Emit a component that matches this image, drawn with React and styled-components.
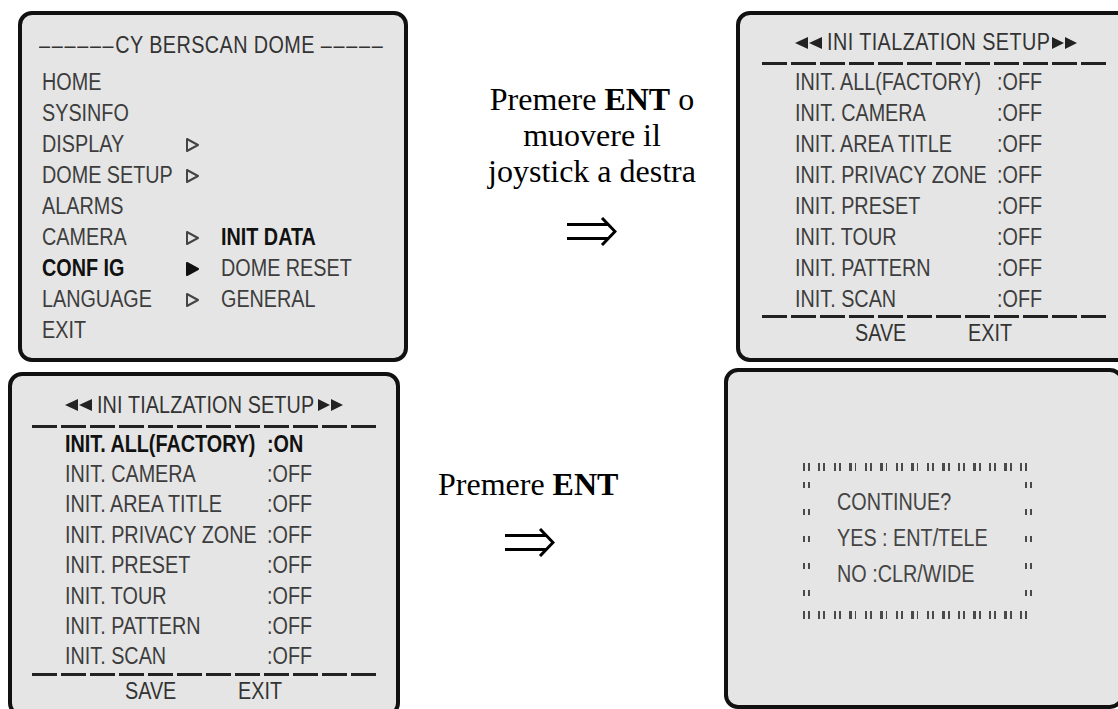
import React from "react";
import styled, { createGlobalStyle, css } from "styled-components";

const OSD_FONT = `"Liberation Sans", Arial, sans-serif`;

// the OSD uses a tall, condensed face: squeeze Liberation Sans to its width
const narrow = css`
  display: inline-block;
  transform: scaleX(0.86);
  transform-origin: left center;
`;

const GlobalStyle = createGlobalStyle`
  html, body {
    margin: 0;
    padding: 0;
    background: #fff;
  }
  body {
    width: 1118px;
    height: 709px;
    overflow: hidden;
  }
`;

// LAYOUT //
const Page = styled.div`
  width: 1118px;
  height: 709px;
  overflow: hidden;
  display: flex;
  flex-direction: column;
`;

const Row = styled.div`
  display: flex;
  align-items: flex-start;
  flex-shrink: 0;
  height: ${(p) => p.$h}px;
`;

const Panel = styled.div`
  box-sizing: border-box;
  flex-shrink: 0;
  width: ${(p) => p.$w}px;
  height: ${(p) => p.$h}px;
  margin: ${(p) => p.$margin};
  padding: ${(p) => p.$pad};
  border: 4px solid #111;
  border-radius: 14px;
  background: #e5e5e5;
  overflow: hidden;
  font-family: ${OSD_FONT};
  font-size: 23px;
  color: #3d3d3d;
  white-space: nowrap;
`;

// CAPTIONS //
const Caption = styled.div`
  box-sizing: border-box;
  flex-shrink: 0;
  width: ${(p) => p.$w}px;
  padding: ${(p) => p.$pad};
  display: flex;
  flex-direction: column;
  align-items: ${(p) => (p.$center ? "center" : "flex-start")};
  font-family: "Liberation Serif", "Times New Roman", serif;
  font-size: 32px;
  line-height: 36px;
  color: #000;
  text-align: center;
  b {
    font-weight: bold;
  }
`;

const ArrowBox = styled.div`
  margin-top: ${(p) => p.$top}px;
  margin-left: ${(p) => p.$left || 0}px;
  line-height: 0;
`;

const BigArrow = ({ top, left }) => (
  <ArrowBox $top={top} $left={left}>
    <svg width="50" height="29" viewBox="0 0 50 29">
      <path d="M0 7.5H42M0 21.5H42" stroke="#000" strokeWidth="3" />
      <path d="M35 1L48 14.5L35 28" stroke="#000" strokeWidth="3" fill="none" />
    </svg>
  </ArrowBox>
);

// MAIN MENU //
const MenuTitle = styled.div`
  height: 31px;
  line-height: 31px;
  margin: 0 0 6px -3px;
  color: #333;
  > span {
    ${narrow}
    letter-spacing: 0.5px;
  }
  i {
    font-style: normal;
    letter-spacing: 2px;
  }
`;

const MenuGrid = styled.div`
  display: grid;
  grid-template-columns: 143px 36px auto;
  grid-auto-rows: 31px;
  align-items: center;
`;

const MenuCell = styled.div`
  ${narrow}
  line-height: 31px;
  font-weight: ${(p) => (p.$bold ? "bold" : "normal")};
  color: ${(p) => (p.$bold ? "#111" : "#3d3d3d")};
`;

const MarkerCell = styled.div`
  display: flex;
  align-items: center;
  height: 31px;
`;

const Tri = ({ filled }) => (
  <svg width="15" height="16" viewBox="0 0 15 16">
    <polygon
      points="2,2 13,8 2,14"
      fill={filled ? "#111" : "none"}
      stroke={filled ? "#111" : "#444"}
      strokeWidth="2"
      strokeLinejoin="round"
    />
  </svg>
);

const menu = [
  { label: "HOME" },
  { label: "SYSINFO" },
  { label: "DISPLAY", mark: "open" },
  { label: "DOME SETUP", mark: "open" },
  { label: "ALARMS" },
  { label: "CAMERA", mark: "open", sub: "INIT DATA", subBold: true },
  { label: "CONF IG", mark: "filled", sub: "DOME RESET", bold: true },
  { label: "LANGUAGE", mark: "open", sub: "GENERAL" },
  { label: "EXIT" },
];

const MainMenu = () => (
  <Panel $w={390} $h={351} $margin="11px 0 0 18px" $pad="15px 0 0 20px">
    <MenuTitle>
      <span>
        <i>––––––</i>CY BERSCAN DOME <i>–––––</i>
      </span>
    </MenuTitle>
    <MenuGrid>
      {menu.map((m) => (
        <React.Fragment key={m.label}>
          <MenuCell $bold={m.bold}>{m.label}</MenuCell>
          <MarkerCell>{m.mark && <Tri filled={m.mark === "filled"} />}</MarkerCell>
          <MenuCell $bold={m.subBold}>{m.sub}</MenuCell>
        </React.Fragment>
      ))}
    </MenuGrid>
  </Panel>
);

// INIT SETUP //
const InitTitle = styled.div`
  display: flex;
  align-items: center;
  height: 31px;
  line-height: 31px;
  margin-left: -3px;
  color: #333;
`;

const TitleText = styled.span`
  flex: none;
  width: ${(p) => p.$w}px;
  margin: 0 ${(p) => p.$gap}px 0 3px;
  span {
    ${narrow}
    letter-spacing: ${(p) => p.$spacing}px;
  }
`;

const DashRule = styled.div`
  width: 346px;
  height: 3px;
  margin: ${(p) => p.$top}px 0 0 -33px;
  background: repeating-linear-gradient(
    90deg,
    #222 0 25px,
    transparent 25px 29px
  );
`;

const InitList = styled.div`
  margin-top: ${(p) => p.$top}px;
  display: grid;
  grid-template-columns: 202px auto;
  grid-auto-rows: ${(p) => p.$pitch}px;
  align-items: center;
`;

const InitCell = styled.div`
  ${narrow}
  font-weight: ${(p) => (p.$bold ? "bold" : "normal")};
  color: ${(p) => (p.$bold ? "#111" : "#3d3d3d")};
`;

const Footer = styled.div`
  display: grid;
  grid-template-columns: 113px auto;
  height: 31px;
  line-height: 31px;
  margin-left: 60px;
  color: #333;
  span {
    ${narrow}
  }
`;

const DoubleArrow = ({ dir }) =>
  dir === "left" ? (
    <svg width="32" height="14" viewBox="0 0 32 14">
      <polygon points="3,7 16,1 16,13" fill="#222" />
      <polygon points="17,7 30,1 30,13" fill="#222" />
    </svg>
  ) : (
    <svg width="27" height="14" viewBox="0 0 27 14">
      <polygon points="0,1 12,7 0,13" fill="#222" />
      <polygon points="13,1 25,7 13,13" fill="#222" />
    </svg>
  );

const InitScreen = ({ rows, pitch, title, panel }) => (
  <Panel {...panel}>
    <InitTitle>
      <DoubleArrow dir="left" />
      <TitleText $w={title.w} $gap={title.gap} $spacing={title.spacing}>
        <span>INI TIALZATION SETUP</span>
      </TitleText>
      <DoubleArrow dir="right" />
    </InitTitle>
    <DashRule $top={4} />
    <InitList $top={1.5} $pitch={pitch}>
      {rows.map((r) => (
        <React.Fragment key={r.label}>
          <InitCell $bold={r.bold}>{r.label}</InitCell>
          <InitCell $bold={r.bold}>:{r.value}</InitCell>
        </React.Fragment>
      ))}
    </InitList>
    <DashRule $top={0.5} />
    <Footer>
      <span>SAVE</span>
      <span>EXIT</span>
    </Footer>
  </Panel>
);

const initLabels = [
  "INIT. ALL(FACTORY)",
  "INIT. CAMERA",
  "INIT. AREA TITLE",
  "INIT. PRIVACY  ZONE",
  "INIT. PRESET",
  "INIT. TOUR",
  "INIT. PATTERN",
  "INIT. SCAN",
];

const rowsOff = initLabels.map((label) => ({ label, value: "OFF" }));
const rowsOn = initLabels.map((label, i) =>
  i === 0 ? { label, value: "ON", bold: true } : { label, value: "OFF" }
);

// CONFIRM //
const Frame = styled.div`
  width: 233px;
  height: 156px;
  display: flex;
  flex-direction: column;
`;

const TickRow = styled.div`
  height: 8px;
  flex-shrink: 0;
  background: repeating-linear-gradient(
    90deg,
    #4a4a4a 0 2px,
    transparent 2px 5px,
    #4a4a4a 5px 7px,
    transparent 7px 15.5px
  );
`;

const FrameBody = styled.div`
  flex: 1;
  display: flex;
`;

const TickColumn = styled.div`
  width: 10px;
  flex-shrink: 0;
  display: flex;
  flex-direction: column;
  gap: 21px;
  padding-top: 11px;
  margin-left: ${(p) => (p.$right ? "auto" : 0)};
  margin-right: ${(p) => (p.$right ? "1px" : 0)};
`;

const Tick = styled.span`
  display: block;
  width: 8px;
  height: 6px;
  background: linear-gradient(
    90deg,
    #4a4a4a 0 2px,
    transparent 2px 5px,
    #4a4a4a 5px 7px,
    transparent 7px
  );
`;

const ConfirmText = styled.div`
  padding: 13px 0 0 24px;
  line-height: 36px;
  color: #444;
  div {
    ${narrow}
    display: block;
  }
`;

const ticks = [0, 1, 2, 3, 4];

const Confirm = () => (
  <Panel $w={400} $h={341} $margin="6px 0 0 0" $pad="91px 0 0 75px">
    <Frame>
      <TickRow />
      <FrameBody>
        <TickColumn>
          {ticks.map((t) => (
            <Tick key={t} />
          ))}
        </TickColumn>
        <ConfirmText>
          <div>CONTINUE?</div>
          <div>YES : ENT/TELE</div>
          <div>NO :CLR/WIDE</div>
        </ConfirmText>
        <TickColumn $right>
          {ticks.map((t) => (
            <Tick key={t} />
          ))}
        </TickColumn>
      </FrameBody>
      <TickRow />
    </Frame>
  </Panel>
);

const App = () => (
  <Page>
    <GlobalStyle />
    <Row $h={362}>
      <MainMenu />
      <Caption $w={328} $pad="81px 0 0 40px" $center>
        <div>
          Premere <b>ENT</b> o
        </div>
        <div>muovere il</div>
        <div>joystick a destra</div>
        <BigArrow top={28} />
      </Caption>
      <InitScreen
        rows={rowsOff}
        pitch={31}
        title={{ w: 225, gap: 0, spacing: 0.5 }}
        panel={{ $w: 400, $h: 351, $margin: "11px 0 0 0", $pad: "12px 0 0 55px" }}
      />
    </Row>
    <Row $h={347}>
      <InitScreen
        rows={rowsOn}
        pitch={30.4}
        title={{ w: 218, gap: 3, spacing: 0.15 }}
        panel={{ $w: 392, $h: 345, $margin: "10px 0 0 8px", $pad: "13.5px 0 0 53px" }}
      />
      <Caption $w={324} $pad="104px 0 0 38px">
        <div>
          Premere <b>ENT</b>
        </div>
        <BigArrow top={26} left={67} />
      </Caption>
      <Confirm />
    </Row>
  </Page>
);

export default App;
